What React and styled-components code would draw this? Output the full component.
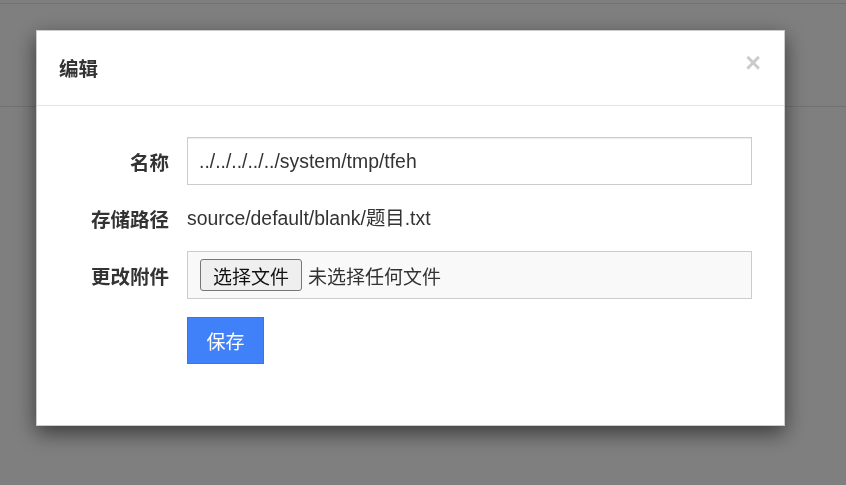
import React, { useState } from "react";
import styled, { createGlobalStyle } from "styled-components";

const GlobalStyle = createGlobalStyle`
  * { box-sizing: border-box; }
  html, body { margin: 0; padding: 0; background: #fff; }
  body {
    font-family: "Liberation Sans", "Noto Sans CJK SC", sans-serif;
    color: #333;
  }
`;

const Page = styled.div`
  height: 100vh;
  padding-top: 3px;
`;

const TopBar = styled.div`
  height: 104px;
  border-top: 1px solid #e4e4e4;
  border-bottom: 1px solid #e4e4e4;
`;

const Backdrop = styled.div`
  position: fixed;
  inset: 0;
  background: rgba(0, 0, 0, 0.5);
  display: flex;
  align-items: flex-start;
  padding: 30px 0 0 36px;
`;

const Modal = styled.div`
  width: 749px;
  background: #fff;
  border: 1px solid rgba(0, 0, 0, 0.2);
  box-shadow: 0 7px 20px rgba(0, 0, 0, 0.55);
`;

const Header = styled.div`
  height: 75px;
  display: flex;
  align-items: center;
  justify-content: space-between;
  padding: 0 23px 2px 22px;
  border-bottom: 1px solid #e5e5e5;

  h4 {
    margin: 0;
    font-size: 19.5px;
    font-weight: 700;
    color: #333;
  }
`;

const Close = styled.button`
  margin-top: -8px;
  border: 0;
  background: none;
  padding: 0;
  font-family: "Liberation Sans", sans-serif;
  font-size: 27px;
  font-weight: 700;
  line-height: 1;
  color: #000;
  opacity: 0.2;
  cursor: pointer;
`;

const Body = styled.div`
  padding: 31px 31px 61px 35px;
  display: grid;
  grid-template-columns: 97px 565px;
  column-gap: 18px;
  row-gap: 18px;
  align-items: center;
`;

const Label = styled.label`
  text-align: right;
  font-size: 19.5px;
  font-weight: 700;
  color: #333;
  white-space: nowrap;
`;

const TextInput = styled.input`
  height: 48px;
  width: 100%;
  padding: 0 11px;
  border: 1px solid #ccc;
  box-shadow: inset 0 1px 1px rgba(0, 0, 0, 0.075);
  font-family: inherit;
  font-size: 19.4px;
  color: #333;
  outline: none;
`;

const StaticText = styled.div`
  height: 30px;
  line-height: 30px;
  font-size: 19.4px;
  color: #333;
  white-space: nowrap;
`;

const FileBox = styled.div`
  height: 48px;
  display: flex;
  align-items: center;
  gap: 6px;
  padding: 0 12px;
  border: 1px solid #ccc;
  background: #f9f9f9;
  font-size: 19px;
  color: #333;
`;

const FileButton = styled.button`
  height: 32px;
  width: 102px;
  padding: 0;
  border: 1px solid #767676;
  border-radius: 3px;
  background: #efefef;
  font-family: inherit;
  font-size: 19px;
  color: #111;
`;

const SaveButton = styled.button`
  justify-self: start;
  width: 77px;
  height: 47px;
  border: 1px solid #3a74e8;
  background: #4080f8;
  color: #fff;
  font-family: inherit;
  font-size: 19px;
  cursor: pointer;
`;

export default function App() {
  const [name, setName] = useState("../../../../../system/tmp/tfeh");

  return (
    <>
      <GlobalStyle />
      <Page>
        <TopBar />
      </Page>
      <Backdrop>
        <Modal>
          <Header>
            <h4>编辑</h4>
            <Close aria-label="close">×</Close>
          </Header>
          <Body>
            <Label>名称</Label>
            <TextInput value={name} onChange={(e) => setName(e.target.value)} />

            <Label>存储路径</Label>
            <StaticText>source/default/blank/题目.txt</StaticText>

            <Label>更改附件</Label>
            <FileBox>
              <FileButton>选择文件</FileButton>
              <span>未选择任何文件</span>
            </FileBox>

            <span />
            <SaveButton>保存</SaveButton>
          </Body>
        </Modal>
      </Backdrop>
    </>
  );
}
